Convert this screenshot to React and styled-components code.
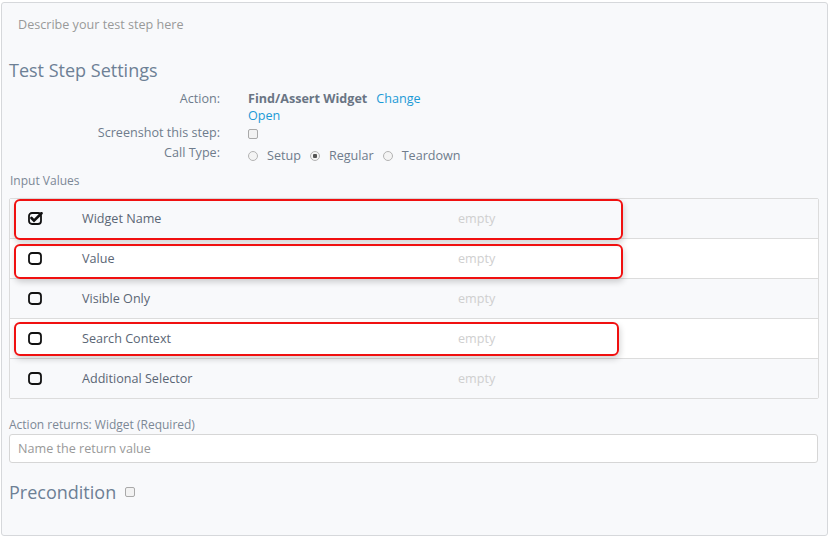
import React from "react";
import styled, { createGlobalStyle } from "styled-components";

const GlobalStyle = createGlobalStyle`
  body {
    margin: 0;
    background: #ffffff;
    font-family: "Open Sans", "Liberation Sans", sans-serif;
    font-size: 12.6px;
  }
`;

const inputs = [
  { name: "Widget Name", checked: true },
  { name: "Value" },
  { name: "Visible Only" },
  { name: "Search Context" },
  { name: "Additional Selector" },
];

const highlights = [
  { left: 5, top: 1, width: 609, height: 41 },
  { left: 5, top: 46, width: 609, height: 35 },
  { left: 5, top: 124, width: 605, height: 34 },
];

function SquareIcon({ checked }) {
  return (
    <svg width="15" height="13" viewBox="0 0 15 13">
      <rect x="1" y="1" width="12" height="11" rx="3" fill="none" stroke="#111" strokeWidth="1.8" />
      {checked && (
        <path d="M3.5 6 L6 8.6 L13.5 1.2" fill="none" stroke="#111" strokeWidth="2.6" strokeLinecap="round" />
      )}
    </svg>
  );
}

function App() {
  return (
    <>
      <GlobalStyle />
      <Panel>
        <Description>Describe your test step here</Description>
        <Title>Test Step Settings</Title>
        <Form>
          <Label>Action:</Label>
          <Value>
            <strong>Find/Assert Widget</strong>
            <LinkText>Change</LinkText>
            <br />
            <LinkText $first>Open</LinkText>
          </Value>
          <Label>Screenshot this step:</Label>
          <Value>
            <SmallBox />
          </Value>
          <Label $shift>Call Type:</Label>
          <RadioGroup>
            <Radio />
            <span>Setup</span>
            <Radio $on />
            <span>Regular</span>
            <Radio />
            <span>Teardown</span>
          </RadioGroup>
        </Form>
        <Caption>Input Values</Caption>
        <TableWrap>
          <Table>
            {inputs.map((p, index) => (
              <Row key={p.name} $odd={index % 2 === 0}>
                <CheckCell>
                  <SquareIcon checked={p.checked} />
                </CheckCell>
                <NameCell>{p.name}</NameCell>
                <EmptyCell>empty</EmptyCell>
              </Row>
            ))}
          </Table>
          {highlights.map((h, index) => (
            <Highlight
              key={index}
              style={{ left: h.left, top: h.top, width: h.width, height: h.height }}
            />
          ))}
        </TableWrap>
        <ReturnLabel>Action returns: Widget (Required)</ReturnLabel>
        <ReturnInput placeholder="Name the return value" />
        <Precondition>
          Precondition
          <SmallBox />
        </Precondition>
      </Panel>
    </>
  );
}

const Panel = styled.div`
  box-sizing: border-box;
  width: 827px;
  height: 534px;
  margin: 2px 0 0 1px;
  padding: 0 8px 0 7px;
  border: 1px solid #d6d8db;
  border-radius: 3px;
  background: #f8f9fb;
`;

const Description = styled.div`
  padding: 13px 9px 0;
  line-height: 18px;
  color: #999;
`;

const Title = styled.h2`
  margin: 25px 0 0;
  font-size: 18px;
  font-weight: 400;
  line-height: 22px;
  color: #6d8095;
`;

const Form = styled.div`
  display: grid;
  grid-template-columns: 211px 1fr;
  column-gap: 28px;
  margin-top: 9px;
  line-height: 17px;
  color: #6f7c8c;
`;

const Label = styled.div`
  text-align: right;
  margin-top: ${(p) => (p.$shift ? "3px" : "0")};
`;

const Value = styled.div`
  strong {
    font-weight: 700;
    color: #6a7584;
  }
`;

const LinkText = styled.span`
  color: #1c9ad6;
  margin-left: ${(p) => (p.$first ? "0" : "9px")};
`;

const SmallBox = styled.span`
  display: inline-block;
  box-sizing: border-box;
  width: 10px;
  height: 10px;
  border: 1px solid #a9a9a9;
  border-radius: 2px;
  background: #f2f2f2;
  vertical-align: middle;
`;

const RadioGroup = styled.div`
  display: flex;
  align-items: center;
  padding-top: 6px;
  span {
    margin-right: 9px;
  }
`;

const Radio = styled.span`
  box-sizing: border-box;
  width: 10px;
  height: 10px;
  margin-right: 8px;
  border: 1px solid #b3b3b3;
  border-radius: 50%;
  background: ${(p) =>
    p.$on ? "radial-gradient(circle, #555 0 2px, #f4f4f4 2.5px)" : "#f4f4f4"};
`;

const Caption = styled.div`
  margin: 9px 0 0 1px;
  font-size: 12px;
  line-height: 16px;
  color: #7c8896;
`;

const TableWrap = styled.div`
  position: relative;
  margin-top: 9px;
`;

const Table = styled.div`
  border: 1px solid #dcdcdc;
  border-radius: 2px;
`;

const Row = styled.div`
  display: grid;
  grid-template-columns: 72px 376px 1fr;
  align-items: center;
  height: 39px;
  background: ${(p) => (p.$odd ? "#f8f9fb" : "#ffffff")};
  & + & {
    border-top: 1px solid #dcdcdc;
  }
`;

const CheckCell = styled.div`
  display: flex;
  padding-left: 18px;
`;

const NameCell = styled.div`
  color: #5b6675;
`;

const EmptyCell = styled.div`
  color: #cfcfcf;
`;

const Highlight = styled.div`
  position: absolute;
  box-sizing: border-box;
  border: 2px solid #f01010;
  border-radius: 6px;
  box-shadow: 1px 3px 6px rgba(0, 0, 0, 0.18);
  pointer-events: none;
`;

const ReturnLabel = styled.div`
  margin-top: 18px;
  font-size: 12px;
  line-height: 16px;
  color: #7c8896;
`;

const ReturnInput = styled.input`
  display: block;
  box-sizing: border-box;
  width: 809px;
  height: 29px;
  margin-top: 1px;
  padding: 0 8px;
  border: 1px solid #d6d6d6;
  border-radius: 3px;
  background: #fff;
  font-family: inherit;
  font-size: 12.6px;
  &::placeholder {
    color: #999;
  }
`;

const Precondition = styled.div`
  display: flex;
  align-items: center;
  gap: 9px;
  margin-top: 18px;
  font-size: 18px;
  line-height: 22px;
  color: #6d8095;
`;

export default App;
